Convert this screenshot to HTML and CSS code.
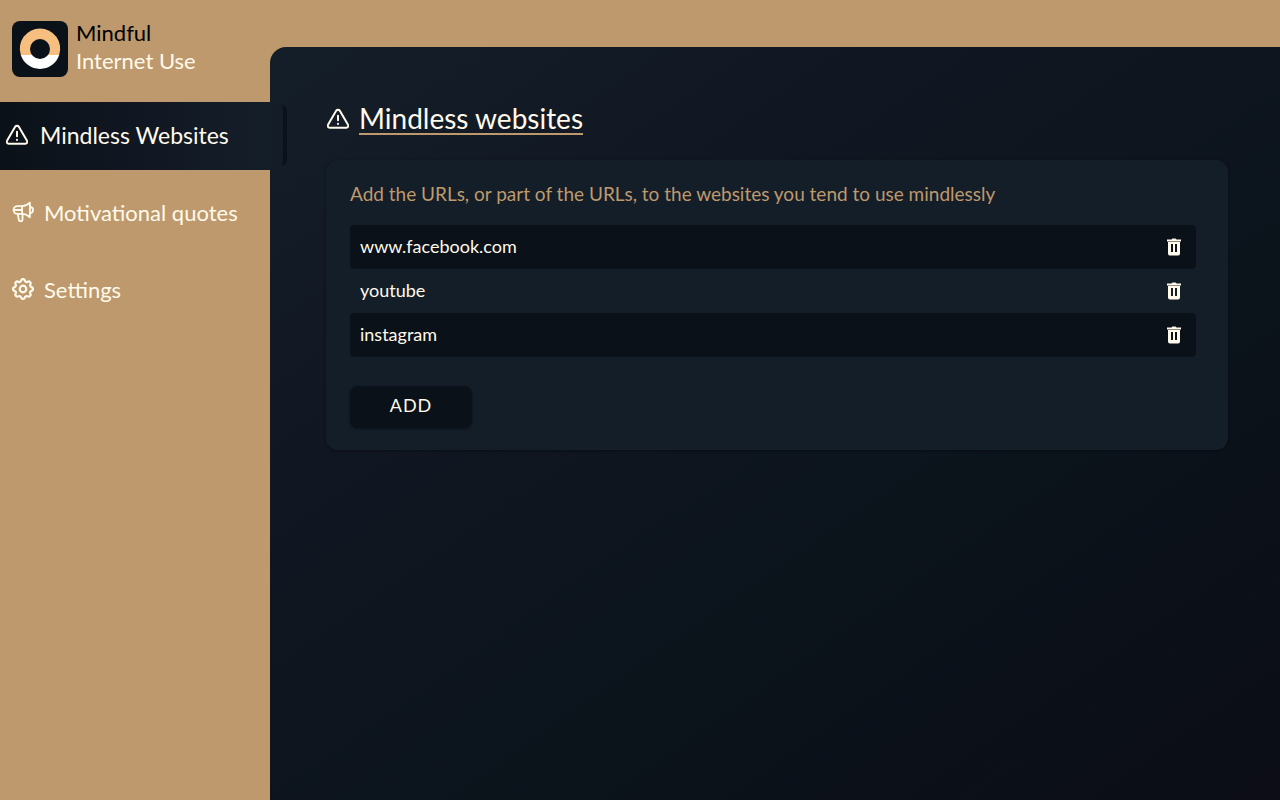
FILE: index.html
```html
<!DOCTYPE html>
<html lang="en">
<head>
  <meta charset="UTF-8" />
  <meta name="viewport" content="width=device-width, initial-scale=1.0"/>
  <title>Mindful Internet Use</title>
  <link rel="stylesheet" href="styles.css">
</head>
<body>
  <svg class="sprite" aria-hidden="true">
    <symbol id="icon-warning" viewBox="1 1 22 22">
      <path d="M10.3 3.6 2 17.800A1.900 1.900 0 0 0 3.700 20.700h16.600a1.900 1.900 0 0 0 1.700-2.900L13.700 3.600a2 2 0 0 0-3.400 0Z" fill="none" stroke="currentColor" stroke-width="2" stroke-linejoin="round"/>
      <path d="M12 8.700v4.500M12 16.700v.2" fill="none" stroke="currentColor" stroke-width="2" stroke-linecap="round"/>
    </symbol>
    <symbol id="icon-trash" viewBox="0 0 16 18">
      <path fill="currentColor" fill-rule="evenodd" d="M5.500 1.500 6.500.5h3l1 1H15v2H1v-2ZM2 3h12v12.500a2 2 0 0 1-2 2H4a2 2 0 0 1-2-2ZM5 6v8h2V6ZM9 6v8h2V6Z"/>
    </symbol>
  </svg>

  <div class="layout">
    <aside class="sidebar">
      <div class="brand">
        <svg class="logo" viewBox="0 0 56 56" aria-hidden="true">
          <rect width="56" height="56" rx="8" fill="#0a1118"/>
          <path d="M8.800 34a20.200 20.200 0 1 1 38.400 0Z" fill="#f6be7f"/>
          <path d="M8.800 34a20.200 20.200 0 0 0 38.400 0Z" fill="#fff"/>
          <circle cx="28" cy="28" r="10" fill="#0a1118"/>
        </svg>
        <div class="brand-name">
          <span class="brand-first">Mindful</span>
          <span>Internet Use</span>
        </div>
      </div>

      <nav class="menu">
        <a class="menu-item active" href="#websites">
          <svg class="icon" aria-hidden="true"><use href="#icon-warning"/></svg>
          Mindless Websites
        </a>
        <a class="menu-item" href="#quotes">
          <svg class="icon" viewBox="0 0 24 24" fill="none" stroke="currentColor" stroke-width="2" stroke-linejoin="round" stroke-linecap="round" aria-hidden="true">
            <path d="M11 5.500H6a4.300 4.300 0 0 0 0 8.600h5c3 0 6 1.200 8.500 3.700V1.800C17 4.300 14 5.500 11 5.500Z"/>
            <path d="M11 5.500v8.600M2.500 9.800H11M19.500 6.500a3.400 3.400 0 0 1 0 6.800"/>
            <path d="M6.300 14.100l1.200 6.500c.2 1 .9 1.600 1.900 1.600 1.300 0 2.100-.9 2.100-2.200v-5.900"/>
          </svg>
          Motivational quotes
        </a>
        <a class="menu-item" href="#settings">
          <svg class="icon" viewBox="2 2 20 20" fill="none" stroke="currentColor" stroke-width="2" stroke-linejoin="round" aria-hidden="true">
            <path d="M10.300 4.300c.4-1.800 3-1.800 3.400 0a1.700 1.700 0 0 0 2.600 1.100c1.500-1 3.300.8 2.400 2.400a1.700 1.700 0 0 0 1 2.500c1.800.4 1.800 3 0 3.400a1.700 1.700 0 0 0-1 2.600c.9 1.500-.9 3.300-2.400 2.400a1.700 1.700 0 0 0-2.600 1c-.4 1.800-3 1.800-3.400 0a1.700 1.700 0 0 0-2.600-1c-1.500.9-3.300-.9-2.400-2.400a1.700 1.700 0 0 0-1-2.600c-1.800-.4-1.800-3 0-3.400a1.700 1.700 0 0 0 1-2.500c-.9-1.600.9-3.400 2.400-2.400a1.700 1.700 0 0 0 2.600-1.100Z"/>
            <circle cx="12" cy="12" r="3"/>
          </svg>
          Settings
        </a>
      </nav>
    </aside>

    <main class="content">
      <h1>
        <svg class="icon" aria-hidden="true"><use href="#icon-warning"/></svg>
        <span class="title">Mindless websites</span>
      </h1>

      <section class="card">
        <p class="hint">Add the URLs, or part of the URLs, to the websites you tend to use mindlessly</p>
        <ul class="sites">
          <li class="site">
            <span class="site-url">www.facebook.com</span>
            <button class="delete" aria-label="Delete www.facebook.com"><svg aria-hidden="true"><use href="#icon-trash"/></svg></button>
          </li>
          <li class="site">
            <span class="site-url">youtube</span>
            <button class="delete" aria-label="Delete youtube"><svg aria-hidden="true"><use href="#icon-trash"/></svg></button>
          </li>
          <li class="site">
            <span class="site-url">instagram</span>
            <button class="delete" aria-label="Delete instagram"><svg aria-hidden="true"><use href="#icon-trash"/></svg></button>
          </li>
        </ul>
        <button class="add">ADD</button>
      </section>
    </main>
  </div>
</body>
</html>
```
FILE: styles.css
```css
:root {
  --accent: #be996d;
  --dark: #0a1118;
  --panel: #141e29;
  --light: #fffaeb;
}
*,
*::after {
  box-sizing: border-box;
}
body {
  margin: 0;
  font-family: Lato, sans-serif;
  color: var(--light);
  background-color: var(--accent);
}
.sprite {
  display: none;
}
.layout {
  display: grid;
  grid-template-columns: 270px 1fr;
  min-height: 100vh;
}

/* sidebar */
.brand {
  display: flex;
  align-items: center;
  gap: 8px;
  height: 102px;
  padding: 0 12px 4px;
}
.logo {
  width: 56px;
  height: 56px;
}
.brand-name {
  display: flex;
  flex-direction: column;
  padding-bottom: 4px;
  font-size: 22px;
  line-height: 28px;
}
.brand-first {
  color: #000;
}
.menu {
  display: flex;
  flex-direction: column;
  gap: 9px;
}
.menu-item {
  display: flex;
  align-items: center;
  gap: 10px;
  height: 68px;
  padding: 0 12px 2px;
  font-size: 22px;
  color: var(--light);
  text-decoration: none;
}
.icon {
  width: 22px;
  height: 22px;
  flex-shrink: 0;
}
.menu-item.active {
  position: relative;
  gap: 12px;
  padding: 0 6px 2px;
  font-size: 23px;
  background: linear-gradient(90deg, var(--dark), #111722 50%, var(--panel));
}
/* edge that reaches over the content panel */
.menu-item.active::after {
  content: "";
  position: absolute;
  left: 100%;
  top: 3px;
  bottom: 4px;
  width: 17px;
  border-right: 4px solid var(--dark);
  border-radius: 0 6px 6px 0;
}

/* content */
.content {
  margin-top: 47px;
  padding: 56px 52px 40px 56px;
  border-top-left-radius: 16px;
  background: linear-gradient(145deg, var(--panel), #111722 30%, #0b131b 65%, #0c0d16);
}
h1 {
  display: flex;
  align-items: center;
  gap: 10px;
  margin: 0 0 25px;
  padding-left: 1px;
  font-size: 28px;
  line-height: 30px;
  font-weight: 400;
}
.title {
  border-bottom: 2px solid var(--accent);
}
.card {
  padding: 22px 32px 22px 24px;
  border-radius: 12px;
  background-color: var(--panel);
  box-shadow: 0 1px 3px rgba(0, 0, 0, 0.4);
}
.hint {
  margin: 0 0 19px;
  font-size: 19px;
  line-height: 24px;
  color: var(--accent);
}
.sites {
  margin: 0 0 29px;
  padding: 0;
  list-style: none;
}
.site {
  display: flex;
  align-items: center;
  justify-content: space-between;
  height: 44px;
  padding: 0 10px;
  border-radius: 4px;
  font-size: 18px;
}
.site:nth-child(odd) {
  background-color: var(--dark);
}
.site-url {
  padding-bottom: 3px;
}
.delete {
  display: flex;
  padding: 4px;
  border: none;
  background: none;
  color: var(--light);
  cursor: pointer;
}
.delete svg {
  width: 16px;
  height: 18px;
}
.add {
  width: 122px;
  height: 42px;
  padding: 0 0 4px;
  border: none;
  border-radius: 8px;
  font-family: inherit;
  font-size: 18px;
  letter-spacing: 1px;
  color: var(--light);
  background-color: var(--dark);
  box-shadow: 0 1px 3px rgba(0, 0, 0, 0.5);
  cursor: pointer;
}
```
